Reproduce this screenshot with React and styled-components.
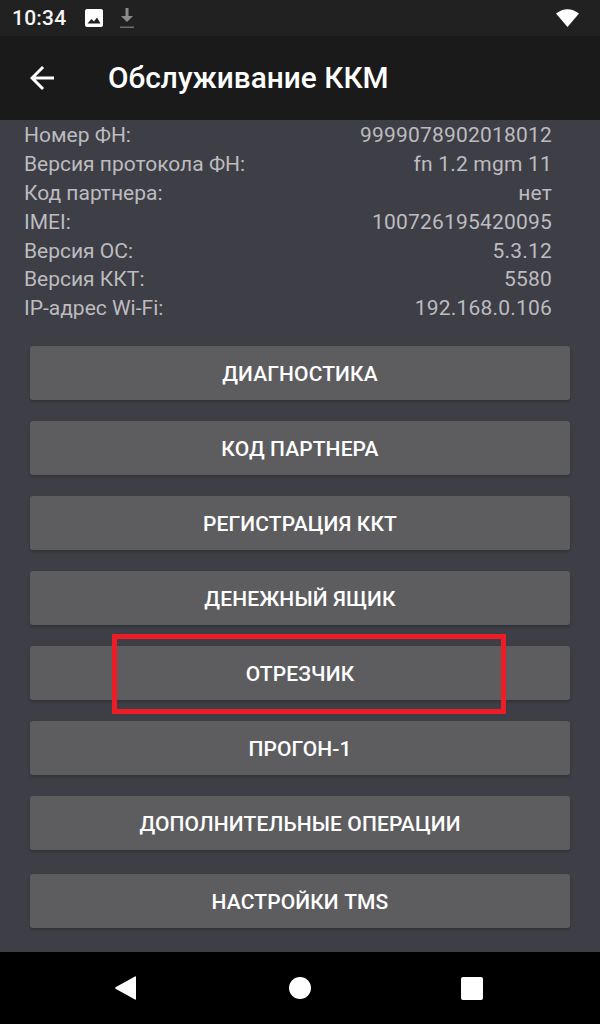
import React from 'react'
import styled, { createGlobalStyle } from 'styled-components'

const Global = createGlobalStyle`
  html, body {
    margin: 0;
    padding: 0;
    background: #3e3e47;
  }
  * {
    box-sizing: border-box;
  }
`

const Screen = styled.div`
  width: 600px;
  height: 1024px;
  display: flex;
  flex-direction: column;
  position: relative;
  overflow: hidden;
  font-family: Roboto, sans-serif;
  color: #fff;
  background: #3e3e47;
`

const StatusBar = styled.div`
  height: 36px;
  flex: none;
  display: flex;
  align-items: center;
  padding: 0 21px 0 12px;
  background: #212121;
`

const Clock = styled.span`
  font-size: 21px;
  font-weight: 500;
  letter-spacing: 0.2px;
  width: 73px;
  color: #f5f5f5;
`

const StatusIcon = styled.svg`
  display: block;
  margin-right: 17px;
`

const Spacer = styled.div`
  flex: 1;
`

const Toolbar = styled.header`
  height: 84px;
  flex: none;
  display: flex;
  align-items: center;
  padding-left: 30px;
  background: #1a1a1a;
`

const BackIcon = styled.svg`
  display: block;
  margin-right: 54px;
`

const Title = styled.h1`
  margin: 0;
  font-size: 29.8px;
  font-weight: 500;
  line-height: 32px;
`

const Content = styled.main`
  flex: 1;
  min-height: 0;
  display: flex;
  flex-direction: column;
  padding: 0 30px;
`

const InfoList = styled.div`
  display: flex;
  flex-direction: column;
  margin: 1px 18px 0 -6px;
  height: 225px;
`

const InfoRow = styled.div`
  height: 28.8px;
  display: flex;
  align-items: center;
  justify-content: space-between;
  font-size: 21px;
  color: #bcbcbf;
`

const InfoValue = styled.span`
  letter-spacing: 0.2px;
`

const Buttons = styled.div`
  display: flex;
  flex-direction: column;
  gap: 21px;
`

const Button = styled.button`
  height: 54px;
  width: 100%;
  border: 0;
  border-radius: 3px;
  padding: 2px 0 0;
  margin-top: ${p => (p.$last ? '3px' : '0')};
  background: #5d5d5f;
  box-shadow: 0 2px 3px rgba(0, 0, 0, 0.2);
  color: #fff;
  font-family: Roboto, sans-serif;
  font-size: 21px;
  font-weight: 500;
  letter-spacing: 0.12px;
  text-transform: uppercase;
`

const NavBar = styled.nav`
  height: 72px;
  flex: none;
  display: flex;
  align-items: center;
  padding: 0 0 0 115px;
  background: #000;
`

const NavBack = styled.svg`
  display: block;
  margin-right: 153px;
`

const NavHome = styled.svg`
  display: block;
  margin-right: 150px;
`

const NavRecent = styled.svg`
  display: block;
`

const Highlight = styled.div`
  position: absolute;
  left: 112px;
  top: 634px;
  width: 394px;
  height: 80px;
  border: 5px solid #ee1c25;
`

const info = [
  ['Номер ФН:', '9999078902018012'],
  ['Версия протокола ФН:', 'fn 1.2 mgm 11'],
  ['Код партнера:', 'нет'],
  ['IMEI:', '100726195420095'],
  ['Версия ОС:', '5.3.12'],
  ['Версия ККТ:', '5580'],
  ['IP-адрес Wi-Fi:', '192.168.0.106']
]

const actions = [
  'Диагностика',
  'Код партнера',
  'Регистрация ККТ',
  'Денежный ящик',
  'Отрезчик',
  'Прогон-1',
  'Дополнительные операции',
  'Настройки TMS'
]

export default function App () {
  return (
    <Screen>
      <Global />
      <StatusBar>
        <Clock>10:34</Clock>
        <StatusIcon width='18' height='18' viewBox='0 0 18 18'>
          <rect width='18' height='18' rx='2' fill='#fff' />
          <path d='M2.5 14.5 L6.5 10 L9 12.5 L12 8.5 L15.5 14.5 Z' fill='#212121' />
        </StatusIcon>
        <StatusIcon width='14' height='21' viewBox='0 0 14 21'>
          <path d='M5.5 0 H8.5 V8 H13 L7 14 L1 8 H5.5 Z' fill='#8a8a8a' />
          <rect y='18.5' width='14' height='1.5' fill='#6f6f6f' />
        </StatusIcon>
        <Spacer />
        <svg width='23' height='20' viewBox='0 0 23 20'>
          <path d='M0 5.5 Q11.5 -3 23 5.5 L11.5 19 Z' fill='#fff' />
        </svg>
      </StatusBar>
      <Toolbar>
        <BackIcon width='24' height='24' viewBox='0 0 24 24'>
          <path d='M24 10.5H5.7l8.4-8.4L12 0 0 12l12 12 2.1-2.1-8.4-8.4H24z' fill='#fff' />
        </BackIcon>
        <Title>Обслуживание ККМ</Title>
      </Toolbar>
      <Content>
        <InfoList>
          {info.map(([label, value]) => (
            <InfoRow key={label}>
              <span>{label}</span>
              <InfoValue>{value}</InfoValue>
            </InfoRow>
          ))}
        </InfoList>
        <Buttons>
          {actions.map((name, i) => (
            <Button key={name} $last={i === actions.length - 1}>{name}</Button>
          ))}
        </Buttons>
      </Content>
      <NavBar>
        <NavBack width='21' height='24' viewBox='0 0 21 24'>
          <path d='M21 1 V23 Q21 24 20 23.5 L0.5 12.8 Q0 12 0.5 11.2 L20 0.5 Q21 0 21 1 Z' fill='#fff' />
        </NavBack>
        <NavHome width='22' height='22' viewBox='0 0 22 22'>
          <circle cx='11' cy='11' r='11' fill='#fff' />
        </NavHome>
        <NavRecent width='22' height='23' viewBox='0 0 22 23'>
          <rect width='22' height='23' rx='2' fill='#fff' />
        </NavRecent>
      </NavBar>
      <Highlight />
    </Screen>
  )
}
